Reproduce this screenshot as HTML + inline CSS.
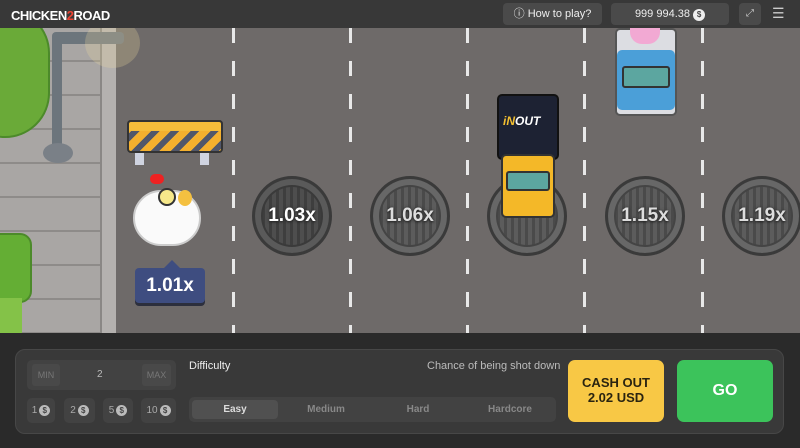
<!DOCTYPE html>
<html><head><style>
*{margin:0;padding:0;box-sizing:border-box}
body{width:800px;height:448px;overflow:hidden;background:#2a2a2a;font-family:"Liberation Sans",sans-serif;position:relative}
.abs{position:absolute}
.hdr{left:0;top:0;width:800px;height:28px;background:#383838}
.game{left:0;top:28px;width:800px;height:305px;background:#6e6a69;overflow:hidden}
.dash{position:absolute;width:3px;top:0;height:305px;background:repeating-linear-gradient(to bottom,#e8e8e8 0 15px,transparent 15px 33px)}
.mh{position:absolute;width:80px;height:80px;border-radius:50%;background:repeating-linear-gradient(90deg,#4a4a4a 0 3px,#5c5c5c 3px 7px);border:3px solid #3a3a3a;box-shadow:inset 0 0 0 6px #676767,inset 0 0 0 8px #444;color:#ddd;font-weight:bold;font-size:19px;display:flex;align-items:center;justify-content:center;text-shadow:0 1px 2px #222,0 0 3px #333}
.mh.a{background:repeating-linear-gradient(90deg,#3e3e3e 0 3px,#4e4e4e 3px 7px);color:#fff;box-shadow:inset 0 0 0 6px #5a5a5a,inset 0 0 0 8px #3a3a3a}
.chip{position:absolute;top:398px;height:25px;background:#424242;border-radius:5px;color:#aaa;font-size:10px;display:flex;align-items:center;justify-content:center;gap:2px}
.coin{width:11px;height:11px;border-radius:50%;background:#bbb;color:#444;font-size:8px;font-weight:bold;display:inline-flex;align-items:center;justify-content:center}
</style></head><body>
<div class="abs hdr">
 <div class="abs" style="left:11px;top:8px;font-weight:bold;font-size:13px;color:#fff;letter-spacing:-0.5px">CHICKEN<span style="color:#e43">2</span>ROAD</div>
 <div class="abs" style="left:503px;top:3px;width:99px;height:22px;background:#4a4a4a;border-radius:4px;color:#eee;font-size:11px;line-height:22px;text-align:center">ⓘ How to play?</div>
 <div class="abs" style="left:611px;top:3px;width:118px;height:22px;background:#4a4a4a;border-radius:4px;color:#eee;font-size:11px;line-height:22px;text-align:center">999 994.38 <span class="coin" style="background:#eee;width:12px;height:12px">$</span></div>
 <div class="abs" style="left:739px;top:3px;width:22px;height:22px;background:#4a4a4a;border-radius:4px;color:#ccc;font-size:10px;line-height:22px;text-align:center">⤢</div>
 <div class="abs" style="left:772px;top:5px;color:#ccc;font-size:14px">☰</div>
</div>
<div class="abs game">
 <div class="abs" style="left:0;top:0;width:116px;height:305px;background:#a9a6a4;background-image:repeating-linear-gradient(to bottom,transparent 0 32px,#8e8b89 32px 34px)"></div>
 <div class="abs" style="left:100px;top:0;width:16px;height:305px;background:#b4b1af;border-left:2px solid #8a8785"></div>
 <div class="abs" style="left:-40px;top:-20px;width:90px;height:130px;background:#6aaa38;border-radius:45px;border:2px solid #4c8a2a"></div>
 <div class="abs" style="left:-20px;top:205px;width:52px;height:70px;background:#64ae34;border-radius:12px;border:2px solid #4c8a2a"></div>
 <div class="abs" style="left:0;top:270px;width:22px;height:35px;background:#84c248"></div>
 <div class="abs" style="left:52px;top:8px;width:10px;height:120px;background:#6c757c;border-radius:4px"></div>
 <div class="abs" style="left:52px;top:4px;width:72px;height:12px;background:#6c757c;border-radius:4px"></div>
 <div class="abs" style="left:43px;top:115px;width:30px;height:20px;background:#7a8087;border-radius:50%"></div>
 <div class="abs" style="left:85px;top:-10px;width:55px;height:50px;border-radius:50%;background:rgba(240,220,160,0.25)"></div>
 <div class="dash" style="left:232px"></div><div class="dash" style="left:349px"></div><div class="dash" style="left:466px"></div><div class="dash" style="left:583px"></div><div class="dash" style="left:701px"></div>
 <div class="mh a" style="left:252px;top:148px">1.03x</div>
 <div class="mh" style="left:370px;top:148px">1.06x</div>
 <div class="mh" style="left:487px;top:148px"></div>
 <div class="mh" style="left:605px;top:148px">1.15x</div>
 <div class="mh" style="left:722px;top:148px">1.19x</div>
 <div class="abs" style="left:127px;top:92px;width:96px;height:33px;border-radius:4px;border:2px solid #333;background:repeating-linear-gradient(135deg,#f4b02e 0 8px,#51576a 8px 14px)"></div>
 <div class="abs" style="left:127px;top:92px;width:96px;height:11px;background:#f6bd3a;border:2px solid #333;border-bottom:none;border-radius:4px 4px 0 0"></div>
 <div class="abs" style="left:135px;top:125px;width:9px;height:12px;background:#cfd3e0"></div><div class="abs" style="left:200px;top:125px;width:9px;height:12px;background:#cfd3e0"></div>
 <div class="abs" style="left:133px;top:162px;width:68px;height:56px;background:#fafafa;border-radius:30px;border:2px solid #ccc"></div>
 <div class="abs" style="left:150px;top:146px;width:14px;height:10px;background:#e22;border-radius:6px"></div>
 <div class="abs" style="left:158px;top:160px;width:18px;height:18px;background:#f6e88a;border-radius:50%;border:2px solid #333"></div>
 <div class="abs" style="left:178px;top:162px;width:14px;height:16px;background:#f4c040;border-radius:50%"></div>
 <div class="abs" style="left:135px;top:240px;width:70px;height:35px;background:#3e4d80;border-radius:4px;color:#fff;font-weight:bold;font-size:19px;line-height:35px;text-align:center;box-shadow:0 3px 0 #2c2f3d">1.01x</div>
 <div class="abs" style="left:164px;top:232px;width:0;height:0;border-left:8px solid transparent;border-right:8px solid transparent;border-bottom:8px solid #3e4d80"></div>
 <div class="abs" style="left:497px;top:66px;width:62px;height:66px;background:#1d2233;border-radius:5px;border:2px solid #111"></div>
 <div class="abs" style="left:503px;top:86px;color:#fff;font-weight:bold;font-style:italic;font-size:12px"><span style="color:#f4c030">iN</span>OUT</div>
 <div class="abs" style="left:501px;top:126px;width:54px;height:64px;background:#f4b828;border-radius:5px;border:2px solid #333"></div>
 <div class="abs" style="left:506px;top:143px;width:44px;height:20px;background:#5ca6a0;border:2px solid #333;border-radius:3px"></div>
 <div class="abs" style="left:615px;top:0;width:62px;height:88px;background:#dcdde2;border-radius:5px;border:2px solid #555"></div>
 <div class="abs" style="left:630px;top:0;width:30px;height:16px;background:#f2a9d3;border-radius:0 0 12px 12px"></div>
 <div class="abs" style="left:617px;top:22px;width:58px;height:60px;background:#4b9fd8;border-radius:5px"></div>
 <div class="abs" style="left:622px;top:38px;width:48px;height:22px;background:#5ca6a0;border:2px solid #333;border-radius:3px"></div>
</div>
<div class="abs" style="left:15px;top:349px;width:769px;height:85px;background:#393939;border:1px solid #474747;border-radius:10px"></div>
<div class="abs" style="left:27px;top:360px;width:149px;height:30px;background:#424242;border-radius:5px"></div>
<div class="abs" style="left:32px;top:364px;width:28px;height:22px;background:#494949;border-radius:3px;color:#777;font-size:9px;line-height:22px;text-align:center">MIN</div>
<div class="abs" style="left:97px;top:369px;color:#bbb;font-size:10px">2</div>
<div class="abs" style="left:142px;top:364px;width:29px;height:22px;background:#494949;border-radius:3px;color:#777;font-size:9px;line-height:22px;text-align:center">MAX</div>
<div class="chip" style="left:27px;width:28px">1<span class="coin">$</span></div>
<div class="chip" style="left:64px;width:31px">2<span class="coin">$</span></div>
<div class="chip" style="left:103px;width:30px">5<span class="coin">$</span></div>
<div class="chip" style="left:141px;width:35px">10<span class="coin">$</span></div>
<div class="abs" style="left:189px;top:360px;color:#eee;font-size:11px">Difficulty</div>
<div class="abs" style="left:427px;top:360px;color:#bbb;font-size:11px">Chance of being shot down</div>
<div class="abs" style="left:189px;top:397px;width:367px;height:25px;background:#424242;border-radius:5px"></div>
<div class="abs" style="left:192px;top:400px;width:86px;height:19px;background:#505050;border-radius:4px"></div>
<div class="abs" style="left:189px;top:404px;width:92px;text-align:center;color:#ddd;font-size:10px;font-weight:bold">Easy</div>
<div class="abs" style="left:280px;top:404px;width:92px;text-align:center;color:#888;font-size:10px;font-weight:bold">Medium</div>
<div class="abs" style="left:372px;top:404px;width:92px;text-align:center;color:#888;font-size:10px;font-weight:bold">Hard</div>
<div class="abs" style="left:464px;top:404px;width:92px;text-align:center;color:#888;font-size:10px;font-weight:bold">Hardcore</div>
<div class="abs" style="left:568px;top:360px;width:96px;height:62px;background:#f8c845;border-radius:7px;color:#2a2410;font-weight:bold;font-size:13px;text-align:center;padding-top:15px;line-height:15px">CASH OUT<br>2.02 USD</div>
<div class="abs" style="left:677px;top:360px;width:96px;height:62px;background:#3cc35b;border-radius:7px;color:#fff;font-weight:bold;font-size:16px;text-align:center;line-height:62px">GO</div>
</body></html>
